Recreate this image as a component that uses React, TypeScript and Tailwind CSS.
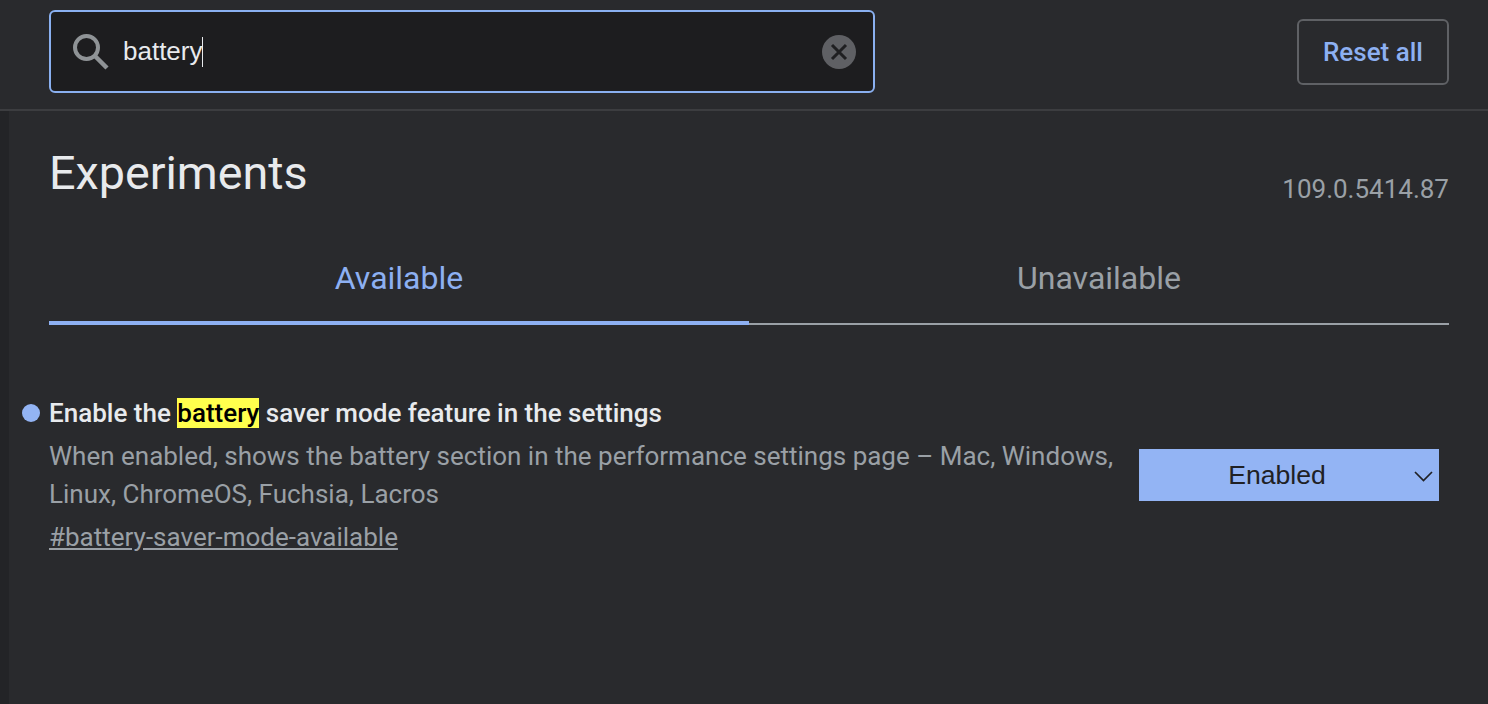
export default function App() {
  return (
    <div className="h-[704px] w-[1488px] overflow-hidden bg-[#292a2d] font-['Roboto',sans-serif]">
      {/* Barra de busca */}
      <header className="flex h-[111px] items-start justify-between border-b-2 border-[#3c3d40] pl-[49px] pr-[39px]">
        <div className="mt-[10px] flex h-[83px] w-[826px] items-center rounded-[6px] border-2 border-[#8ab0f0] bg-[#1d1d1f] pl-[21px] pr-[17px]">
          <svg width="38" height="38" viewBox="0 0 38 38" fill="none" className="shrink-0 text-[#8f9396]">
            <circle cx="14.5" cy="14.5" r="11.5" stroke="currentColor" strokeWidth="4" />
            <path d="M23 23L35 35" stroke="currentColor" strokeWidth="4.5" />
          </svg>
          <div className="ml-[13px] flex flex-1 items-center font-['Liberation_Sans',sans-serif] text-[26px] text-[#e8eaed]">
            <span>battery</span>
            <span className="ml-[-1px] h-[30px] w-[1px] bg-[#e8eaed]" />
          </div>
          <div className="flex h-[34px] w-[34px] items-center justify-center rounded-full bg-[#5f6064]">
            <svg width="20" height="20" viewBox="0 0 20 20" fill="none">
              <path d="M3 3L17 17M17 3L3 17" stroke="#1f1f21" strokeWidth="3" />
            </svg>
          </div>
        </div>
        <button className="mt-[19px] flex h-[66px] w-[152px] items-center justify-center rounded-[6px] border-2 border-[#5f6165] text-[26px] font-medium text-[#8db0f2]">
          Reset all
        </button>
      </header>

      <div className="flex h-[593px]">
        <div className="w-[9px] shrink-0 bg-[#232427]" />
        <main className="flex-1 pl-[40px] pr-[39px]">
          <div className="flex items-start justify-between pt-[33px]">
            <h1 className="text-[46.7px] leading-[58px] font-normal text-[#e8eaed]">Experiments</h1>
            <span className="mt-[29px] text-[26px] leading-[32px] text-[#9aa0a6]">109.0.5414.87</span>
          </div>

          {/* Abas */}
          <div className="mt-[44px] grid grid-cols-2 text-center text-[32px] leading-[38px]">
            <div className="h-[76px] border-b-4 border-[#8db0f2] pt-[10px] text-[#8db0f2]">Available</div>
            <div className="h-[76px] border-b-2 border-[#9aa0a6] pt-[10px] text-[#9aa0a6]">Unavailable</div>
          </div>

          {/* Item */}
          <div className="relative mt-[74px] flex justify-between">
            <span className="absolute top-[5px] left-[-27px] h-[18px] w-[18px] rounded-full bg-[#93b4f4]" />
            <div className="w-[1075px]">
              <h2 className="text-[26px] leading-[28px] font-medium text-[#e8eaed]">
                Enable the <mark className="bg-[#ffff4d] text-black">battery</mark> saver mode feature in the settings
              </h2>
              <p className="mt-[10px] text-[26px] leading-[38px] text-[#9aa0a6]">
                When enabled, shows the battery section in the performance settings page – Mac, Windows, Linux, ChromeOS, Fuchsia, Lacros
              </p>
              <a className="mt-[5px] block text-[26px] leading-[38px] text-[#9aa0a6] underline">#battery-saver-mode-available</a>
            </div>
            <div className="relative mt-[50px] mr-[10px] flex h-[52px] w-[300px] items-center justify-center bg-[#93b4f4] pt-[2px] font-['Liberation_Sans',sans-serif] text-[26.6px] text-[#202124]">
              <span className="pr-[24px]">Enabled</span>
              <svg width="19" height="11" viewBox="0 0 19 11" fill="none" className="absolute right-[6px]">
                <path d="M1 1L9.5 9.5L18 1" stroke="#202124" strokeWidth="1.7" />
              </svg>
            </div>
          </div>
        </main>
      </div>
    </div>
  );
}
